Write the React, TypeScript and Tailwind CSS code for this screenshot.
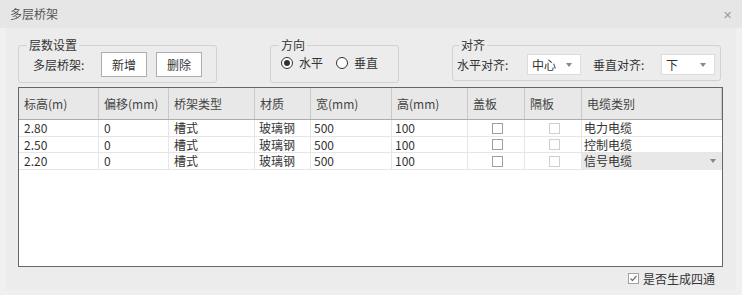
import React from "react";

const cols = [
  { title: "标高(m)", w: "w-[80px]" },
  { title: "偏移(mm)", w: "w-[70px]" },
  { title: "桥架类型", w: "w-[86px]" },
  { title: "材质", w: "w-[56px]" },
  { title: "宽(mm)", w: "w-[81px]" },
  { title: "高(mm)", w: "w-[76px]" },
  { title: "盖板", w: "w-[57px]" },
  { title: "隔板", w: "w-[57px]" },
  { title: "电缆类别", w: "w-[140px]" },
];

const rows = [
  { h: "2.80", off: "0", type: "槽式", mat: "玻璃钢", wd: "500", ht: "100", cable: "电力电缆" },
  { h: "2.50", off: "0", type: "槽式", mat: "玻璃钢", wd: "500", ht: "100", cable: "控制电缆" },
  { h: "2.20", off: "0", type: "槽式", mat: "玻璃钢", wd: "500", ht: "100", cable: "信号电缆" },
];

function Arrow() {
  return (
    <span className="w-0 h-0 border-l-[3px] border-r-[3px] border-t-[4px] border-l-transparent border-r-transparent border-t-[#888]" />
  );
}

function Select({ value }: { value: string }) {
  return (
    <div className="w-[54px] h-[21px] bg-white border border-[#dcdcdc] flex items-center justify-between pl-[4px] pr-[8px]">
      <span className="leading-none">{value}</span>
      <Arrow />
    </div>
  );
}

function Radio({ checked, label }: { checked?: boolean; label: string }) {
  return (
    <div className="flex items-center gap-[6px]">
      <span className="w-[12px] h-[12px] rounded-full border border-[#333] bg-white flex items-center justify-center">
        {checked && <span className="w-[6px] h-[6px] rounded-full bg-[#333]" />}
      </span>
      <span>{label}</span>
    </div>
  );
}

function Box({ disabled }: { disabled?: boolean }) {
  return (
    <span
      className={
        disabled
          ? "w-[11px] h-[11px] border border-[#cfcfcf] bg-white"
          : "w-[11px] h-[11px] border border-[#a0a0a0] bg-white"
      }
    />
  );
}

export default function App() {
  return (
    <div className="w-[742px] h-[295px] bg-[#f0f0f0] flex flex-col text-[12px] text-[#333] font-['Noto_Sans_CJK_SC',sans-serif] overflow-hidden">
      {/* Title bar */}
      <div className="h-[28px] bg-[#e6e6e6] flex items-center justify-between pl-[10px] pr-[10px]">
        <span className="text-[#555] text-[12px]">多层桥架</span>
        <span className="text-[#999] text-[11px] leading-none">✕</span>
      </div>

      <div className="flex-1 bg-[#ececec] mx-[6px] mb-[5px] flex flex-col pt-[10px] px-[12px]">
        {/* Groups */}
        <div className="flex items-start">
          <fieldset className="w-[199px] shrink-0 h-[45px] border border-[#d2d2d2] rounded-[3px] px-[14px]">
            <legend className="ml-[-6px] px-[2px] leading-[14px]">层数设置</legend>
            <div className="flex items-center h-[25px]">
              <span className="w-[68px]">多层桥架:</span>
              <button className="w-[46px] h-[25px] bg-white border border-[#adadad]">新增</button>
              <button className="w-[46px] h-[25px] bg-white border border-[#adadad] ml-[9px]">删除</button>
            </div>
          </fieldset>

          <fieldset className="w-[129px] shrink-0 h-[45px] ml-[53px] border border-[#d2d2d2] rounded-[3px] px-[10px]">
            <legend className="ml-[-2px] px-[2px] leading-[14px]">方向</legend>
            <div className="flex items-center h-[22px] gap-[13px]">
              <Radio checked label="水平" />
              <Radio label="垂直" />
            </div>
          </fieldset>

          <fieldset className="w-[269px] shrink-0 h-[43px] ml-[53px] border border-[#d2d2d2] rounded-[3px] px-[4px]">
            <legend className="ml-[2px] px-[2px] leading-[14px]">对齐</legend>
            <div className="flex items-center h-[25px]">
              <span className="w-[70px]">水平对齐:</span>
              <Select value="中心" />
              <span className="ml-[12px] w-[68px]">垂直对齐:</span>
              <Select value="下" />
            </div>
          </fieldset>
        </div>

        {/* Table */}
        <div className="mt-[4px] w-[705px] h-[180px] border border-[#666] bg-white flex flex-col">
          <div className="h-[32px] bg-[#e8e8e8] border-b border-[#ababab] flex">
            {cols.map((c) => (
              <div key={c.title} className={`${c.w} h-full border-r border-[#c8c8c8] flex items-center pl-[5px] text-[#444]`}>
                {c.title}
              </div>
            ))}
          </div>
          {rows.map((r, i) => (
            <div
              key={r.h}
              className={
                i === 1
                  ? "h-[16px] leading-[14px] flex border-b border-[#e6e6e6]"
                  : "h-[17px] leading-[14px] flex border-b border-[#e6e6e6]"
              }
            >
              <div className="w-[80px] border-r border-[#e6e6e6] pl-[5px] flex items-center">{r.h}</div>
              <div className="w-[70px] border-r border-[#e6e6e6] pl-[5px] flex items-center">{r.off}</div>
              <div className="w-[86px] border-r border-[#e6e6e6] pl-[5px] flex items-center">{r.type}</div>
              <div className="w-[56px] border-r border-[#e6e6e6] pl-[4px] flex items-center">{r.mat}</div>
              <div className="w-[81px] border-r border-[#e6e6e6] pl-[3px] flex items-center">{r.wd}</div>
              <div className="w-[76px] border-r border-[#e6e6e6] pl-[3px] flex items-center">{r.ht}</div>
              <div className="w-[57px] border-r border-[#e6e6e6] flex items-center justify-center pl-[2px]">
                <Box />
              </div>
              <div className="w-[57px] border-r border-[#e6e6e6] flex items-center justify-center pl-[2px]">
                <Box disabled />
              </div>
              <div
                className={
                  i === 2
                    ? "w-[140px] bg-[#e8e8e8] pl-[2px] pr-[6px] flex items-center justify-between"
                    : "w-[140px] pl-[2px] flex items-center"
                }
              >
                <span>{r.cable}</span>
                {i === 2 && <Arrow />}
              </div>
            </div>
          ))}
        </div>

        {/* Footer */}
        <div className="flex-1 flex items-center justify-end pr-[9px]">
          <div className="flex items-center gap-[4px]">
            <span className="w-[11px] h-[11px] border border-[#a0a0a0] bg-white flex items-center justify-center">
              <svg width="9" height="9" viewBox="0 0 9 9">
                <path d="M1.5 4.5 L3.5 6.5 L7.5 2" fill="none" stroke="#777" strokeWidth="1.3" />
              </svg>
            </span>
            <span>是否生成四通</span>
          </div>
        </div>
      </div>
    </div>
  );
}
